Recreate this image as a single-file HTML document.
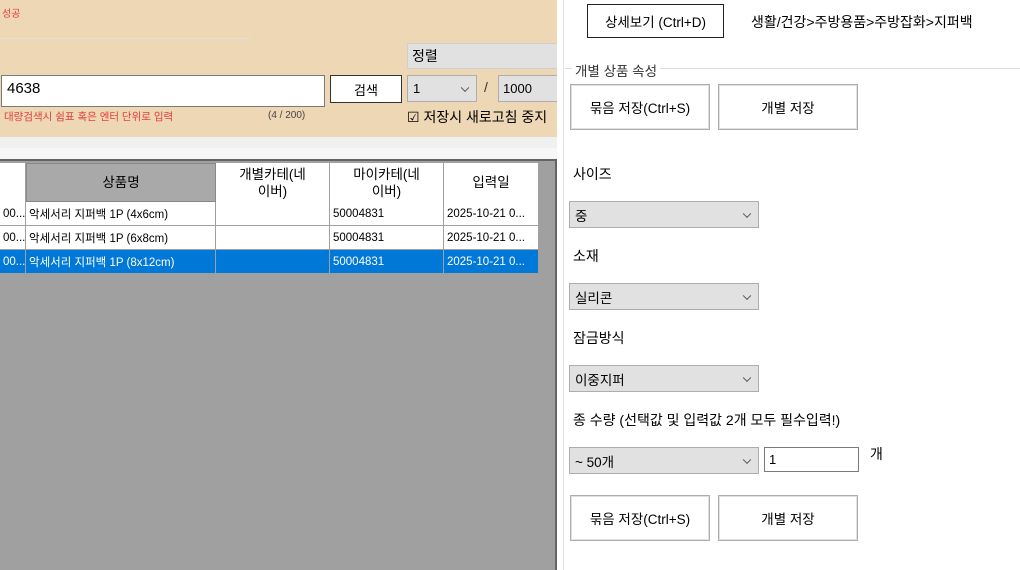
<!DOCTYPE html>
<html><head><meta charset="utf-8"><style>
*{box-sizing:border-box;margin:0;padding:0}
body{width:1020px;height:570px;overflow:hidden;background:#fff;font-family:"Liberation Sans","Noto Sans CJK KR",sans-serif;font-size:13px;color:#000;position:relative}
.a{position:absolute}
.btn{position:absolute;background:#fff;border:1px solid #adadad;box-shadow:inset 0 0 0 1px #e1e1e1;display:flex;align-items:center;justify-content:center;font-size:13.5px}
.cb{position:absolute;background:#e1e1e1;border:1px solid #adadad;font-size:13.5px;padding-left:5px;display:flex;align-items:center}
.cb:after{content:"";position:absolute;right:8px;top:50%;width:5px;height:5px;border-right:1px solid #555;border-bottom:1px solid #555;transform:translateY(-70%) rotate(45deg)}
.cell{position:absolute;font-size:11.5px;border-right:1px solid #a0a0a0;border-bottom:1px solid #a0a0a0;padding-left:3px;display:flex;align-items:center;white-space:nowrap;overflow:hidden}
.hd{position:absolute;background:#fff;border-right:1px solid #a0a0a0;font-size:13.5px;text-align:center;display:flex;align-items:center;justify-content:center;line-height:17px}
</style></head><body>
<div class="a" style="left:0;top:0;width:557px;height:570px;background:#f0f0f0"></div>
<div class="a" style="left:0;top:0;width:557px;height:137px;background:#eed7b5"></div>
<div class="a" style="left:2px;top:5px;color:#e04040;font-size:10px">성공</div>
<div class="a" style="left:0;top:38px;width:250px;height:1px;background:#e0e0e0"></div>
<div class="a" style="left:407px;top:43px;width:150px;height:26px;background:#e1e1e1;border:1px solid #cfcfcf;border-right:none;padding-left:4px;font-size:14px;line-height:24px">정렬</div>
<div class="a" style="left:1px;top:75px;width:324px;height:32px;background:#fff;border:1px solid #7a7a7a;padding-left:5px;font-size:15px;line-height:26px">4638</div>
<div class="btn" style="left:330px;top:75px;width:72px;height:28px;border-color:#333;box-shadow:none;font-size:13px">검색</div>
<div class="cb" style="left:407px;top:75px;width:70px;height:27px;font-size:13px">1</div>
<div class="a" style="left:484px;top:79px;font-size:14px;color:#333">/</div>
<div class="a" style="left:498px;top:75px;width:59px;height:27px;background:#e1e1e1;border:1px solid #adadad;border-right:none;padding-left:4px;font-size:13px;line-height:25px">1000</div>
<div class="a" style="left:4px;top:109px;color:#e04040;font-size:10.5px">대량검색시 쉼표 혹은 엔터 단위로 입력</div>
<div class="a" style="left:268px;top:110px;color:#444;font-size:10px">(4 / 200)</div>
<div class="a" style="left:407px;top:107px;font-size:14px;white-space:nowrap;width:150px;overflow:hidden">☑ 저장시 새로고침 중지</div>
<div class="a" style="left:0;top:148px;width:557px;height:12px;background:#f7f7f7"></div>
<div class="a" style="left:0;top:159px;width:557px;height:411px;background:#a0a0a0;border-top:2px solid #646464;border-right:2px solid #646464"></div>
<div class="hd" style="left:0;top:163px;width:26px;height:39px"></div>
<div class="hd" style="left:26px;top:163px;width:190px;height:39px;background:#a9a9a9;border:1px solid #888">상품명</div>
<div class="hd" style="left:216px;top:163px;width:114px;height:39px">개별카테(네<br>이버)</div>
<div class="hd" style="left:330px;top:163px;width:114px;height:39px">마이카테(네<br>이버)</div>
<div class="hd" style="left:444px;top:163px;width:95px;height:39px">입력일</div>
<div id="rows"></div>
<div class="a" style="left:557px;top:0;width:6px;height:570px;background:#fff"></div>
<div class="a" style="left:563px;top:0;width:1px;height:570px;background:#e3e3e3"></div>
<div class="btn" style="left:587px;top:4px;width:137px;height:34px;border-color:#222;box-shadow:none">상세보기 (Ctrl+D)</div>
<div class="a" style="left:751px;top:12px;font-size:14px">생활/건강&gt;주방용품&gt;주방잡화&gt;지퍼백</div>
<div class="a" style="left:565px;top:68px;width:455px;height:1px;background:#dcdcdc"></div>
<div class="a" style="left:572px;top:60px;background:#fff;padding:0 3px;font-size:13.5px;color:#333">개별 상품 속성</div>
<div class="btn" style="left:570px;top:84px;width:140px;height:46px">묶음 저장(Ctrl+S)</div>
<div class="btn" style="left:718px;top:84px;width:140px;height:46px">개별 저장</div>
<div class="a" style="left:573px;top:164px;font-size:14px">사이즈</div>
<div class="cb" style="left:569px;top:201px;width:190px;height:27px">중</div>
<div class="a" style="left:573px;top:246px;font-size:14px">소재</div>
<div class="cb" style="left:569px;top:283px;width:190px;height:27px">실리콘</div>
<div class="a" style="left:573px;top:328px;font-size:14px">잠금방식</div>
<div class="cb" style="left:569px;top:365px;width:190px;height:27px">이중지퍼</div>
<div class="a" style="left:573px;top:410px;font-size:14px">종 수량 (선택값 및 입력값 2개 모두 필수입력!)</div>
<div class="cb" style="left:569px;top:447px;width:190px;height:27px">~ 50개</div>
<div class="a" style="left:764px;top:447px;width:95px;height:25px;border:1px solid #7a7a7a;padding-left:4px;line-height:23px;font-size:13px">1</div>
<div class="a" style="left:870px;top:444px;font-size:14px">개</div>
<div class="btn" style="left:570px;top:495px;width:140px;height:46px">묶음 저장(Ctrl+S)</div>
<div class="btn" style="left:718px;top:495px;width:140px;height:46px">개별 저장</div>
<script>
var r=[["악세서리 지퍼백 1P (4x6cm)",0],["악세서리 지퍼백 1P (6x8cm)",0],["악세서리 지퍼백 1P (8x12cm)",1]],h="";
r.forEach(function(x,i){var t=202+i*24,bg=x[1]?"#0078d7":"#fff",c=x[1]?"#fff":"#000";
var cols=[[0,26,"00..."],[26,190,x[0]],[216,114,""],[330,114,"50004831"],[444,95,"2025-10-21 0..."]];
cols.forEach(function(k){h+='<div class="cell" style="left:'+k[0]+'px;top:'+t+'px;width:'+k[1]+'px;height:24px;background:'+bg+';color:'+c+'">'+k[2]+'</div>'})});
document.getElementById("rows").innerHTML=h;
</script>
</body></html>
